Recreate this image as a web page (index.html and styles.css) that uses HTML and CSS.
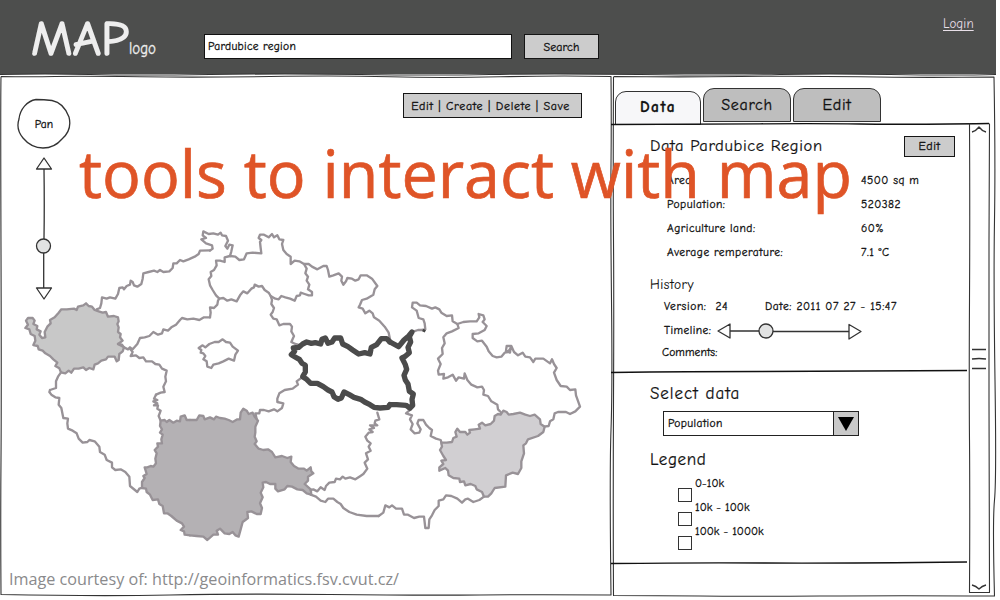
FILE: index.html
```html
<!DOCTYPE html>
<html lang="en">
<head>
<meta charset="utf-8">
<title>Map wireframe</title>
<link rel="stylesheet" href="styles.css">
</head>
<body>
<div class="app">
  <header class="header">
    <svg class="logo" width="136" height="60" viewBox="26 4 136 60">
      <text class="logo-main" x="31" y="55" textLength="98" lengthAdjust="spacingAndGlyphs">MAP</text>
      <text class="logo-sub" x="129" y="54" textLength="27" lengthAdjust="spacingAndGlyphs">logo</text>
    </svg>
    <div class="search-field"><span class="w-region">Pardubice region</span></div>
    <div class="button search-button"><span>Search</span></div>
    <a class="login">Login</a>
  </header>

  <main class="main">
    <section class="map-panel">
      <svg class="map" width="612" height="523" viewBox="0 225 1836 1569">
        <g transform="translate(0 630)">
          <path class="region karlovy" d="M183 487L178 475 166 468 172 458 160 448 150 438 136 430 128 422 116 418 113 408 100 405 106 392 104 378 92 372 88 358 76 354 84 344 78 332 84 324 98 324 104 332 100 342 112 348 110 358 122 364 118 374 126 384 136 382 134 366 142 350 152 340 150 330 164 322 176 308 184 298 200 298 222 296 230 300 234 290 250 286 258 280 266 288 276 290 284 300 296 304 308 308 318 306 324 320 342 318 354 322 356 334 352 342 356 352 354 366 362 372 360 382 368 392 354 402 372 412 368 424 358 432 356 450 350 454 344 440 324 440 318 448 304 452 294 460 284 464 280 478 268 474 258 480 250 472 236 476 222 476 214 488 206 482 196 490Z"/>
          <path class="border" d="M290 298L300 294 304 280 306 262 320 266 330 262 346 266 354 252 358 234 368 232 372 238 380 228 390 224 392 212 398 216 402 226 412 230 424 222 428 206 430 190 446 186 462 182 472 186 480 180 490 186 508 184 518 174 520 160 530 160 540 150 550 154 566 148 584 140 596 132 600 122 630 121"/>
          <path class="border" d="M354 402L366 404 372 412 384 418 390 412 398 418 412 402 420 384 434 382 448 378 460 366 474 374 486 370 490 358 504 362 514 352 528 344 540 330 546 324 562 328 580 326 598 330 612 322 630 322"/>
          <path class="border" d="M390 416L398 426 392 438 408 436 418 444 430 442 438 454 456 454 466 462 478 464 486 476 500 482 496 500 498 514 490 530 494 546 482 548 468 554"/>
          <path class="border" d="M183 487L174 500 168 514 168 534 150 540"/>
        </g>
        <g transform="translate(570 630)">
          <path class="border" d="M60 122L68 116 66 106 48 100 34 88 48 84 38 76 40 64 56 72 70 70 84 74 92 68 96 76 108 78 114 92 106 108 112 116 118 104 128 106 124 124 120 138"/>
          <path class="border" d="M120 138L104 142 104 156 90 152 78 152 80 166 72 180 62 186 64 198 56 208 60 226 68 240 78 256 88 266 100 264 112 272 124 268 140 274 150 256 160 244 172 250 184 236 192 232 194 224 206 230 216 228 224 240 236 248 242 258 256 266 266 268 274 258 286 262 300 266 314 272 320 258 330 256 332 248 344 252 356 256 366 256 366 246 354 238 358 224 350 212 354 200 346 190 350 176 342 162"/>
          <path class="border" d="M120 138L136 140 148 150 162 148 170 130 188 128 214 130 212 114 210 96 214 90 206 84 210 74 222 74 236 82 246 72 252 82 262 76 268 88 280 90 276 102 280 120 290 132 302 140 302 162 314 152 328 154 342 162 356 162 366 170 382 178 400 168 410 168 414 180 418 200 430 196 446 190 456 200 454 212 460 224 468 214 472 204 486 206 496 212 506 208 512 196 530 196 546 206 562 228 554 238 550 254 530 266 516 270 510 284 506 292 518 296 526 310 538 302 548 310 552 322 568 332 584 350 596 368 600 388"/>
          <path class="border" d="M242 258L246 270 244 282 252 294 248 306 242 314 250 326 260 328 268 346 280 342 300 342 306 350 304 364 312 378 304 396 316 402 324 404"/>
          <path class="border" d="M60 322L62 308 60 292 72 294 82 284 84 272 88 266"/>
          <path class="border" d="M26 414L38 406 46 412 58 402 74 396 86 396 98 388 108 396 120 398 128 410 144 422 136 434 132 452 116 446 100 454 86 460 70 464 64 474 52 470 50 454 40 448 46 438 40 430 32 428 34 420Z"/>
        </g>
        <g transform="translate(0 1140)">
          <path class="border" d="M150 30L148 36 154 44 166 52 178 54 176 74 184 84 188 104 190 114 204 116 202 130 204 146 218 152 230 160 236 176 248 188 262 186 268 180 284 184 298 200 300 216 314 224 320 240 336 248 336 262 346 270 362 268 376 276 388 290 390 318 412 336 418 326 430 322"/>
          <path class="border" d="M468 44L462 56 472 60 460 64 472 70 462 76 474 76 472 86 482 92 476 108 482 122"/>
          <path class="region south" d="M570 120L560 120 554 106 542 110 540 124 530 122 520 128 508 120 500 126 494 120 482 122 480 138 486 148 480 158 488 164 484 178 486 190 472 190 474 200 464 210 470 220 466 236 468 250 460 260 452 258 442 262 434 262 440 282 430 288 434 294 426 306 426 324 438 326 440 336 450 344 458 360 474 358 478 372 488 378 492 400 502 400 514 408 530 422 546 430 552 440 542 450 552 454 554 464 570 466"/>
        </g>
        <g transform="translate(570 1140)">
          <path class="region south" d="M0 120L20 120 28 106 40 108 44 118 60 112 72 118 78 110 90 114 104 116 116 120 128 126 142 118 150 118 152 98 160 86 170 92 176 102 188 98 194 110 204 122 196 140 196 158 194 170 200 184 194 192 206 206 220 210 234 208 246 216 256 232 276 228 292 234 304 230 302 246 312 258 326 266 342 266 350 272 362 262 364 274 370 280 354 290 354 302 344 312 362 328 364 344 350 340 338 330 322 328 306 320 292 318 284 328 264 334 256 326 256 312 240 312 228 306 218 308 220 322 212 338 218 352 210 370 216 384 212 402 200 402 184 394 172 396 174 414 158 426 152 448 146 470 136 466 128 456 118 462 104 460 90 446 80 452 84 464 70 464 52 480 40 470 20 468 0 466"/>
          <path class="border" d="M336 -8L320 4 324 14 308 26 284 30 268 40 262 56 262 66 280 70 276 84 262 94 252 88 236 94 222 90 210 90 208 100 196 100 200 116"/>
          <path class="border" d="M562 98L568 118 556 122 554 130 562 136 540 136 552 144 538 148 548 156 536 158 526 170 532 182 542 190 536 200 542 212 528 220 534 238 524 248 532 266 520 282 508 290 496 298 480 292 466 296 458 290 450 298 438 296 434 306 418 308 408 318 404 330 392 322 382 334 370 328 362 330"/>
          <path class="border" d="M362 344L378 350 392 362 406 366 414 356 430 356 442 366 452 372 460 384 478 396 500 404 530 408 560 408 566 408"/>
        </g>
        <g transform="translate(1140 1200)">
          <path class="border" d="M-4 348L10 338 16 316 28 322 36 316 48 326 66 326 72 344 84 344 102 354 118 350 132 350 136 384 146 384 148 358 156 346 164 330 176 318 176 302 190 298 198 286 214 288 232 296 246 308 256 298 264 296 280 306 298 300 312 290"/>
          <path class="border" d="M84 26L92 28 78 40 96 46 90 58 98 72 92 88 104 100 118 98 122 88 112 70 116 60 130 60 138 74 148 84 156 90 152 108 168 116 182 120 186 134"/>
          <path class="region zlin" d="M186 140L184 128 200 128 216 126 220 114 230 110 226 96 232 86 240 96 256 96 262 104 270 98 268 90 284 88 300 86 296 74 306 68 316 76 332 72 342 62 344 48 354 42 362 44 370 32 380 36 386 44 400 42 420 38 436 44 450 48 464 44 480 58 482 72 494 80 490 96 474 108 444 118 438 130 430 136 432 160 424 184 424 204 414 222 398 218 378 226 376 260 344 264 334 280 324 290 312 290 306 276 290 268 286 258 272 252 256 256 252 244 240 246 238 236 220 234 206 226 204 212 196 204 178 212 178 202 190 192 184 182 198 180 190 168 180 150Z"/>
        </g>
        <g transform="translate(1170 840)">
          <path class="border" d="M72 154L84 150 94 150 106 148 104 130 100 118 86 114 80 92 66 82 68 68 80 68 90 76 108 78 126 86 136 82 148 88 154 98 170 108 186 106 188 124 202 132 206 144 186 154 170 160 160 172 164 190 156 204 158 222 144 236 152 252 144 272 146 284 162 282 160 296 174 292 188 284 198 302 206 292 222 296 224 280 232 300 244 314 262 322 276 320 282 330 280 344 294 348 304 364 322 374 324 388 332 396"/>
          <path class="border" d="M202 132L220 126 240 124 260 124 268 112 266 102 280 106 284 118 278 126 290 138 284 150 266 160 248 162 248 174 262 184 276 182 290 200 296 214 308 228 320 232 334 230 344 218 354 216 362 204 360 218 348 212 350 198 364 198 372 216 384 226 398 218 406 230 420 232 430 246 436 236 460 236 480 250 486 238 492 252 500 264 492 278 500 300 512 318 530 320 540 330 556 328 558 346 570 380 556 394 540 402 528 396 504 396 494 400 490 418 480 424 476 438 462 440"/>
          <path class="tick" d="M98 150l8 4"/>
          <path class="selected" d="M0 186L26 200 42 180 56 168 66 156 58 170 62 186 54 202 58 218 44 230 36 234 46 254 50 268 42 286 46 300 54 312 58 334 70 342 66 358 68 376 60 384 48 376 20 374 0 374"/>
        </g>
        <g transform="translate(570 630)">
          <path class="selected" d="M600 396L590 386 574 386 560 404 544 412 540 432 524 428 506 432 488 420 474 410 458 402 452 384 434 384 426 396 414 400 406 384 396 388 392 402 376 398 364 400 350 396 338 402 326 412 310 414 314 424 304 434 314 440 328 448 336 460 346 466 346 486 338 500 350 508 362 520 382 520 400 530 414 540 426 546 432 560 444 568 454 564 462 546 478 554 492 562 512 568 524 576 540 584 552 592 570 594 594 592 600 584"/>
        </g>
      </svg>

      <div class="map-top">
        <div class="navigator">
          <div class="pan">
            <svg class="pan-ring" width="54" height="52" viewBox="0 0 54 52"><path d="M19 1.500Q27 1.500 35 2.500C43 4 49 11 52 19C54 27 52 35 45 41C40 47 33 50 26 50C17 50 11 46 6 40C1 34 0 27 2 21C3 11 10 3 19 1.500Z"/></svg>
            <span>Pan</span>
          </div>
          <svg class="zoom-slider" width="18" height="144" viewBox="0 0 18 144"><path d="M9 2L16.500 13H1.500ZM9 13Q9.500 50 9 83M8.700 97V132M1.500 132H16.500L9 143Z"/><circle cx="8.500" cy="90" r="7"/></svg>
        </div>
        <div class="button toolbar"><span>Edit | Create | Delete | Save</span></div>
      </div>
      <svg class="credit" width="410" height="28" viewBox="0 0 410 28"><text x="9" y="19" textLength="390" lengthAdjust="spacingAndGlyphs">Image courtesy of: http://geoinformatics.fsv.cvut.cz/</text></svg>
    </section>

    <aside class="sidebar">
      <nav class="tabs">
        <div class="tab active"><span>Data</span></div>
        <div class="tab"><span>Search</span></div>
        <div class="tab"><span>Edit</span></div>
      </nav>
      <div class="body">
        <div class="content">
          <section class="details">
            <div class="title-row"><h2>Data Pardubice Region</h2><div class="button edit-button"><span>Edit</span></div></div>
            <dl class="facts">
              <dt>Area:</dt><dd>4500 sq m</dd>
              <dt>Population:</dt><dd>520382</dd>
              <dt>Agriculture land:</dt><dd>60%</dd>
              <dt>Average remperature:</dt><dd>7.1 °C</dd>
            </dl>
            <h3>History</h3>
            <div class="version-row"><span class="version">Version:&nbsp; 24</span><span class="date">Date: 2011 07 27 - 15:47</span></div>
            <div class="timeline-row"><span>Timeline:</span>
              <svg width="146" height="18" viewBox="0 0 146 18"><path d="M1 9L13 2V16ZM13 9H42M56 9.500H132M132 2.500V17L144 9.500Z"/><circle cx="49" cy="9" r="7"/></svg>
            </div>
            <div class="comments-row">Comments:</div>
          </section>
          <section class="selection">
            <h2>Select data</h2>
            <div class="select"><span>Population</span><div class="select-arrow"><svg width="16" height="14" viewBox="0 0 16 14"><path d="M0 0H16L8 14Z"/></svg></div></div>
            <h2 class="legend-title">Legend</h2>
            <ul class="legend">
              <li><i></i><span>0-10k</span></li>
              <li><i></i><span>10k - 100k</span></li>
              <li><i></i><span>100k - 1000k</span></li>
            </ul>
          </section>
        </div>
        <div class="scrollbar">
          <svg width="16" height="8" viewBox="0 0 16 8"><path d="M1 6Q5 5 8 1Q11 5 15 6"/></svg>
          <svg width="16" height="22" viewBox="0 0 16 22"><path d="M1 1.500H15M1 11Q8 10 15 11M1 20.500H15"/></svg>
          <svg width="16" height="8" viewBox="0 0 16 8"><path d="M1 2Q5 3 8 6Q11 3 15 2"/></svg>
        </div>
      </div>
    </aside>
  </main>

  <svg class="sketch-lines" width="1000" height="600" viewBox="0 0 1000 600">
    <path d="M0 74.500Q45 73.500 90 74.500T210 74.500T360 74.500T490 74.500T640 74.500T780 74.500T890 74.500T996 74.500"/>
    <path d="M1 76.500Q30 77 55 76.500T140 76.800T270 76.500T390 76.800T500 76.800T611 76.500Q611.500 120 611 165T611.500 300T611 430T611 595Q540 594.500 480 595T330 594.500T170 595T1 594.500Q0.500 520 1 460T1 250T1 76.500"/>
    <path d="M613.500 76.500Q680 77.200 740 76.500T860 76.800T994 77Q995.500 160 994.500 220T995 380T994.500 500T994.500 596Q900 595.500 820 596T700 596T613.500 595.500Q613 500 613.500 400T613.500 240T613.500 77"/>
    <path class="strong" d="M611 124.500Q700 124.300 760 123.800T860 124T989 123.500M611 372.500Q690 371.500 760 371.500T967 370.500M611 563.500Q700 562.500 765 563T967 562"/>
    <path d="M969.500 123.500Q970 220 969.500 300T969.500 440T969.500 592.500H989.500Q989 500 989 400T989 240T989.500 123.500"/>
    <text class="annotation" x="79" y="198" textLength="773" lengthAdjust="spacingAndGlyphs">tools to interact with map</text>
  </svg>
</div>
</body>
</html>
```
FILE: styles.css
```css
* { box-sizing: border-box; }
body {
  margin: 0;
  background: #fff;
  color: #111;
  font-family: "Comic Sans MS", "Comic Neue", "Open Sans", sans-serif;
  font-size: 11.5px;
  letter-spacing: 0.5px;
  line-height: 1;
  overflow: hidden;
  -webkit-text-stroke: 0.3px currentColor;
}
h2, h3, dl, dd, ul { margin: 0; padding: 0; font-weight: 400; }
svg { display: block; flex: none; }
svg text { letter-spacing: 0; -webkit-text-stroke: 0; }
svg path, svg circle { fill: none; stroke: #333; stroke-width: 1.3; stroke-linejoin: round; }
svg circle { fill: #e2e3e3; }

.app { position: relative; width: 1000px; height: 600px; }
.header {
  display: flex;
  width: 996px;
  height: 74px;
  padding-left: 26px;
  background: #4d4e4d;
}
.logo { margin-top: 4px; }
.logo text { fill: #eee; }
.logo .logo-main { font-size: 49px; stroke: #eee; stroke-width: 1.7; stroke-linejoin: round; }
.logo-sub { font-size: 17px; stroke: #eee; stroke-width: 0.3; }
.search-field {
  width: 308px;
  height: 25px;
  margin: 34px 0 0 42px;
  padding: 6px 3px;
  border: 1px solid #111;
  background: #fff;
  letter-spacing: 0.3px;
}
.button {
  display: flex;
  align-items: center;
  justify-content: center;
  border: 1.5px solid #151515;
  background: #ccc;
  white-space: pre;
}
.search-button { width: 75px; height: 25px; margin: 34px 0 0 12px; font-size: 12px; letter-spacing: 0.1px; }
.login { margin: 17px 0 0 344px; color: #e8dfe8; font-size: 13px; letter-spacing: 0.1px; text-decoration: underline; text-underline-offset: 2px; -webkit-text-stroke: 0; }

.main { display: flex; gap: 1px; height: 523px; margin-top: 1px; }
.map-panel { position: relative; display: flex; flex-direction: column; justify-content: space-between; width: 612px; }
.map { position: absolute; left: 0; top: 0; }
.map .border, .map .region { stroke: #989297; stroke-width: 7; stroke-linecap: round; }
.map .karlovy { fill: #c8c8c8; }
.map .south { fill: #b4b1b4; }
.map .zlin { fill: #d1cfd2; }
.map .selected { stroke: #4b4b4b; stroke-width: 16; stroke-linecap: round; }
.map .tick { stroke: #444; stroke-width: 8; }
.map-top { position: relative; display: flex; justify-content: space-between; padding: 18px 30px 0 17px; }
.navigator { display: flex; flex-direction: column; gap: 6px; padding-top: 5px; }
.pan { display: grid; place-items: center; width: 54px; height: 52px; letter-spacing: 0; }
.pan > * { grid-area: 1 / 1; }
.pan span { padding-top: 1px; }
.zoom-slider { margin-left: 18px; }
.toolbar { width: 179px; height: 25px; padding-right: 4px; font-size: 12px; letter-spacing: 0.68px; }
.credit { position: relative; margin-bottom: 4px; }
.credit text { fill: #8a8a8c; font-family: "Myriad Pro", "Open Sans", sans-serif; font-size: 16.5px; }

.sidebar { display: flex; flex-direction: column; width: 383px; padding-top: 13px; }
.tabs { display: flex; gap: 2px; height: 36px; padding-left: 2px; }
.tab {
  display: flex;
  align-items: center;
  justify-content: center;
  width: 88px;
  height: 34px;
  border: 1px solid #333;
  border-radius: 11px 11px 0 0;
  background: #bebebe;
  font-size: 16px;
  letter-spacing: 0.7px;
}
.tab.active { width: 86px; margin-top: 3px; background: #f7f7f9; font-size: 15.5px; font-weight: 700; letter-spacing: 1.5px; }
.body { display: flex; height: 469px; }
.content { width: 356px; }
.details { height: 247px; padding-left: 37px; }
.title-row { display: flex; align-items: center; justify-content: space-between; height: 44px; padding-right: 14px; }
h2 { font-size: 16.5px; letter-spacing: 0.6px; -webkit-text-stroke-width: 0.2px; }
.edit-button { width: 51px; height: 21px; font-size: 12px; }
.facts { display: grid; grid-template-columns: 194px 1fr; grid-auto-rows: 24px; align-items: center; padding: 1px 0 0 17px; }
h3 { height: 20px; margin-top: 9px; padding-top: 4px; font-size: 13.5px; -webkit-text-stroke-width: 0.1px; }
.version-row, .timeline-row { display: flex; align-items: center; height: 24px; padding: 1px 0 0 14px; letter-spacing: 0.6px; }
.version { width: 101px; }
.timeline-row { height: 26px; gap: 6px; padding-top: 0; letter-spacing: 0.45px; }
.comments-row { height: 17px; padding: 3px 0 0 12px; letter-spacing: 0.1px; }
.selection { padding: 10px 0 0 37px; }
.selection h2 { display: flex; align-items: center; height: 24px; font-size: 17px; letter-spacing: 0.95px; }
.select { display: flex; justify-content: space-between; width: 196px; height: 25px; margin: 6px 0 0 13px; border: 1.3px solid #222; }
.select span { padding: 6px 4px; letter-spacing: 0.4px; }
.select-arrow { display: flex; align-items: center; justify-content: center; width: 25px; border-left: 1.3px solid #222; background: #c9c9c9; }
.select-arrow path { fill: #000; stroke: none; }
.selection .legend-title { margin-top: 11px; letter-spacing: 0.6px; }
.legend { list-style: none; padding: 0 0 0 28px; }
.legend li { display: flex; gap: 3px; height: 24px; }
.legend i { width: 14px; height: 14px; margin-top: 17px; border: 1.3px solid #333; }
.legend span { padding-top: 7px; letter-spacing: 0.1px; }
.scrollbar { display: flex; flex-direction: column; align-items: center; justify-content: space-between; width: 20px; padding: 2px 0 2px; }

.sketch-lines { position: absolute; left: 0; top: 0; pointer-events: none; }
.sketch-lines path { stroke-width: 1.1; }
.sketch-lines path.strong { stroke: #111; stroke-width: 1.3; }
.annotation { fill: #df5427; stroke: #df5427; stroke-width: 0.7; font-family: "Myriad Pro", "Open Sans", sans-serif; font-size: 66.5px; }
```
